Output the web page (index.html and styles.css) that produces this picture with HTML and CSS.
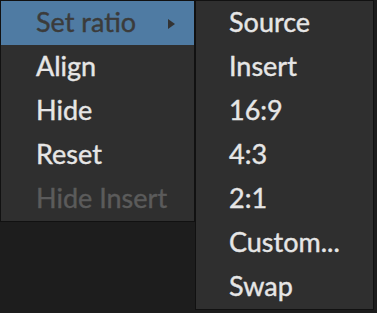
FILE: index.html
```html
<!DOCTYPE html>
<html>
<head>
<meta charset="utf-8">
<link rel="stylesheet" href="styles.css">
</head>
<body>
<div class="stage">
  <ul class="menu menu-main">
    <li class="item active"><span class="label">Set ratio</span><span class="arrow"></span></li>
    <li class="item"><span class="label">Align</span></li>
    <li class="item"><span class="label">Hide</span></li>
    <li class="item"><span class="label">Reset</span></li>
    <li class="item disabled"><span class="label">Hide Insert</span></li>
  </ul>
  <ul class="menu menu-sub">
    <li class="item"><span class="label">Source</span></li>
    <li class="item"><span class="label">Insert</span></li>
    <li class="item"><span class="label">16:9</span></li>
    <li class="item"><span class="label">4:3</span></li>
    <li class="item"><span class="label">2:1</span></li>
    <li class="item"><span class="label">Custom...</span></li>
    <li class="item"><span class="label">Swap</span></li>
  </ul>
</div>
</body>
</html>
```
FILE: styles.css
```css
html, body {
  margin: 0;
  padding: 0;
  background: #1d1d1d;
  width: 377px;
  height: 313px;
  overflow: hidden;
}
.stage {
  display: flex;
  align-items: flex-start;
}
.menu {
  list-style: none;
  margin: 0;
  padding: 0;
  background: #2f2f2f;
  border: 1px solid #111111;
  font-family: "Lato", "Liberation Sans", sans-serif;
  font-size: 27px;
  color: #e6e6e6;
  -webkit-text-stroke: 0.4px currentColor;
}
.menu-main {
  width: 193px;
}
.menu-sub {
  width: 177px;
}
.item {
  display: flex;
  align-items: center;
  height: 44px;
  line-height: 44px;
  box-sizing: border-box;
  padding-bottom: 2px;
}
.menu-main .item {
  padding-left: 35px;
  padding-right: 19px;
}
.menu-sub .item {
  padding-left: 33px;
}
.item.active {
  background: #4f7ba3;
  color: #3b3b3b;
}
.item.disabled {
  color: #5b5b5b;
}
.arrow {
  margin-left: auto;
  width: 0;
  height: 0;
  border-left: 7px solid #333333;
  border-top: 5.5px solid transparent;
  border-bottom: 5.5px solid transparent;
  margin-top: 4px;
}
```
